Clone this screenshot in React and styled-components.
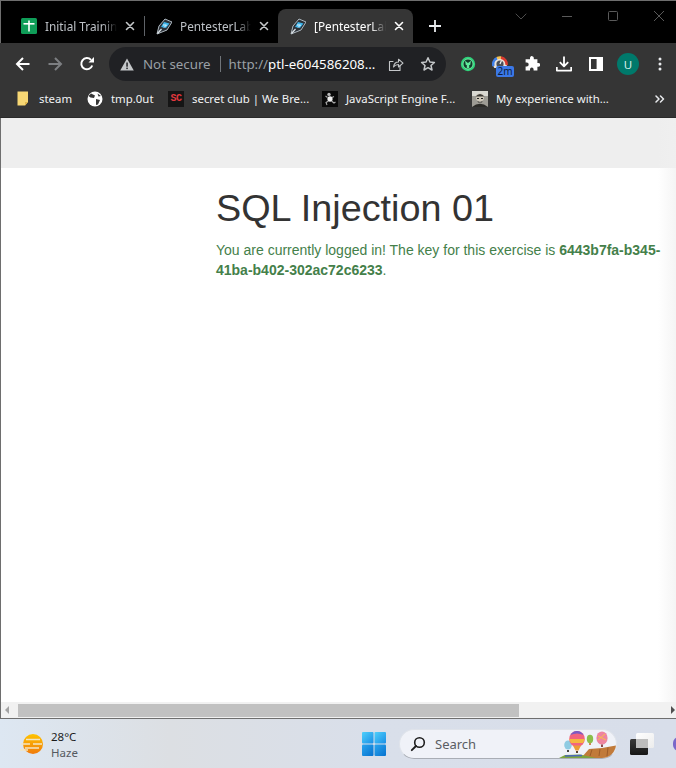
import React from "react";
import styled, { createGlobalStyle } from "styled-components";

const GlobalStyle = createGlobalStyle`
  html, body {
    margin: 0;
    padding: 0;
    background: #fff;
  }
  * {
    box-sizing: border-box;
  }
`;

const Screen = styled.div`
  width: 676px;
  height: 768px;
  overflow: hidden;
  display: flex;
  flex-direction: column;
  font-family: "Noto Sans", "Open Sans", sans-serif;
`;

const TabStrip = styled.div`
  height: 43px;
  flex: none;
  background: #000;
  border-top: 1px solid #6e6e6e;
  border-left: 1px solid #6e6e6e;
  display: flex;
  align-items: flex-end;
  padding-left: 8px;
`;

const Tab = styled.div`
  position: relative;
  width: ${({ $width }) => $width}px;
  height: 34px;
  flex: none;
  display: flex;
  align-items: center;
  gap: 8px;
  padding: 0 9px 0 12px;
  border-radius: 8px 8px 0 0;
  background: ${({ $active }) => ($active ? "#353535" : "transparent")};
  color: ${({ $active }) => ($active ? "#fff" : "#bdc1c6")};
`;

const TabDivider = styled.div`
  width: 1px;
  height: 20px;
  flex: none;
  margin: 0 -1px 7px 0;
  background: #5f6368;
`;

const TabTitle = styled.span`
  flex: 1;
  min-width: 0;
  font-size: 11.8px;
  white-space: nowrap;
  overflow: hidden;
  -webkit-mask-image: linear-gradient(to right, #000 80%, transparent 100%);
  mask-image: linear-gradient(to right, #000 80%, transparent 100%);
`;

const NewTab = styled.div`
  width: 24px;
  height: 34px;
  flex: none;
  margin-left: 10px;
  display: flex;
  align-items: center;
  justify-content: center;
`;

const WindowControls = styled.div`
  margin-left: auto;
  margin-right: -6px;
  align-self: flex-start;
  display: flex;
  height: 30px;
  align-items: center;
  flex: none;
`;

const WindowButton = styled.div`
  width: 46px;
  height: 30px;
  display: flex;
  align-items: center;
  justify-content: center;
`;

const Toolbar = styled.div`
  height: 42px;
  flex: none;
  background: #353535;
  display: flex;
  align-items: center;
  padding-left: 7px;
`;

const ToolButton = styled.div`
  width: 32px;
  height: 32px;
  flex: none;
  display: flex;
  align-items: center;
  justify-content: center;
  position: relative;
`;

const NavGroup = styled.div`
  display: flex;
  width: 102px;
  flex: none;
`;

const Omnibox = styled.div`
  width: 337px;
  height: 34px;
  flex: none;
  border-radius: 17px;
  background: #202124;
  display: flex;
  align-items: center;
  padding-left: 11px;
  padding-right: 2px;
  font-size: 13.3px;
`;

const Security = styled.span`
  color: #9aa0a6;
  margin-left: 9px;
  white-space: nowrap;
`;

const OmniDivider = styled.div`
  width: 1px;
  height: 16px;
  background: #70757a;
  margin: 0 8px 0 9px;
  flex: none;
`;

const Url = styled.span`
  flex: 1;
  min-width: 0;
  color: #fff;
  white-space: nowrap;
  overflow: hidden;
`;

const UrlScheme = styled.span`
  color: #9aa0a6;
`;

const ExtensionGroup = styled.div`
  display: flex;
  flex: none;
  margin-left: 6px;
`;

const Badge = styled.span`
  position: absolute;
  left: 12px;
  bottom: 3px;
  width: 18px;
  height: 11px;
  border-radius: 2px;
  background: #3b78e7;
  color: #0d1d3a;
  font-size: 10px;
  line-height: 11px;
  text-align: center;
`;

const Avatar = styled.div`
  width: 22px;
  height: 22px;
  border-radius: 50%;
  background: #00796b;
  color: #d9f0ec;
  font-size: 11.5px;
  display: flex;
  align-items: center;
  justify-content: center;
`;

const BookmarkBar = styled.div`
  height: 33px;
  flex: none;
  background: #353535;
  border-bottom: 1px solid #2a2a2a;
  display: flex;
  align-items: center;
  padding-bottom: 5px;
`;

const Bookmark = styled.div`
  display: flex;
  align-items: center;
  gap: 8px;
  flex: none;
  width: ${({ $width }) => $width}px;
  color: #f1f3f4;
  font-size: 11.4px;
  white-space: nowrap;
  overflow: hidden;
`;

const BookmarkList = styled.div`
  display: flex;
  padding-left: 16px;
  flex: 1;
`;

const ScFavicon = styled.span`
  width: 16px;
  height: 16px;
  flex: none;
  background: #151515;
  color: #e2383f;
  font-family: "Liberation Mono", monospace;
  font-size: 10px;
  font-weight: 700;
  line-height: 16px;
  text-align: center;
  letter-spacing: -0.5px;
`;

const Chevrons = styled.div`
  width: 32px;
  flex: none;
  display: flex;
  justify-content: center;
`;

const PageTopBand = styled.div`
  height: 50px;
  flex: none;
  background: #eee;
  border-left: 1px solid #6e6e6e;
`;

const Page = styled.main`
  flex: 1;
  min-height: 0;
  position: relative;
  background: #fff;
  border-left: 1px solid #6e6e6e;
  padding: 19px 0 0 215px;
  font-family: "Liberation Sans", Arial, sans-serif;
  &::after {
    content: "";
    position: absolute;
    top: -50px;
    right: 0;
    bottom: 0;
    width: 18px;
    background: linear-gradient(to right, rgba(240, 240, 240, 0), rgba(240, 240, 240, 0.7));
  }
`;

const Heading = styled.h1`
  margin: 0 0 10px;
  font-size: 37.8px;
  line-height: 43px;
  font-weight: 400;
  color: #333;
  white-space: nowrap;
`;

const Message = styled.p`
  margin: 0;
  width: 450px;
  font-size: 14px;
  line-height: 20px;
  color: #44804a;
`;

const Scrollbar = styled.div`
  height: 17px;
  flex: none;
  background: #f1f1f1;
  border-left: 1px solid #6e6e6e;
  border-bottom: 1px solid #6e6e6e;
  display: flex;
  align-items: center;
  justify-content: space-between;
  padding: 0 1px 0 4px;
  position: relative;
`;

const ScrollThumb = styled.div`
  position: absolute;
  left: 17px;
  top: 2px;
  width: 501px;
  height: 13px;
  background: #c1c1c1;
`;

const ScrollArrow = styled.span`
  width: 0;
  height: 0;
  border-top: 4px solid transparent;
  border-bottom: 4px solid transparent;
  ${({ $dir }) =>
    $dir === "left" ? "border-right: 4px solid #a3a3a3;" : "border-left: 4px solid #505050;"}
`;

const Taskbar = styled.footer`
  height: 49px;
  flex: none;
  background: linear-gradient(to right, #dde7f2 0%, #dcdfe3 25%, #d9dfea 55%, #d8deea 100%);
  display: flex;
  align-items: center;
  padding-left: 20px;
`;

const Weather = styled.div`
  display: flex;
  align-items: center;
  gap: 7px;
  width: 342px;
  flex: none;
`;

const WeatherText = styled.div`
  display: flex;
  flex-direction: column;
  margin-top: 3px;
  font-size: 11.5px;
  line-height: 16px;
  color: #1b1b1b;
`;

const WeatherSub = styled.span`
  color: #555a60;
`;

const SearchPill = styled.div`
  width: 218px;
  height: 30px;
  flex: none;
  margin-left: 13px;
  border-radius: 15px;
  background: #f0f2f8;
  border: 1px solid #dfe3ea;
  border-bottom-color: #a9adb5;
  display: flex;
  align-items: center;
  gap: 9px;
  padding-left: 10px;
  position: relative;
  overflow: hidden;
  font-size: 13px;
  color: #5a5d63;
`;

const SearchArt = styled.div`
  position: absolute;
  right: 0;
  top: 0;
  line-height: 0;
`;

const TaskView = styled.div`
  margin-left: 13px;
  line-height: 0;
  flex: none;
`;

const PinnedApp = styled.div`
  margin-left: 19px;
  width: 12px;
  height: 14px;
  flex: none;
  border-radius: 6px 0 0 6px;
  background: #7a68c9;
`;

const stroke = { fill: "none", stroke: "currentColor", strokeLinecap: "round", strokeLinejoin: "round" };

function SheetsIcon() {
  return (
    <svg width="16" height="16" viewBox="0 0 16 16" style={{ flex: "none" }}>
      <rect width="16" height="16" rx="1.5" fill="#0f9d58" />
      <rect x="2.5" y="5" width="11" height="1.6" fill="#fff" />
      <rect x="7.2" y="2.5" width="1.6" height="11" fill="#fff" />
    </svg>
  );
}

function LabIcon() {
  return (
    <svg width="16" height="17" viewBox="0 0 16 17" style={{ flex: "none" }}>
      <path d="M9 1 L16 4 L11 12 L1 16 L3 8 Z" fill="#2c3138" stroke="#aeb8c0" strokeWidth="1" strokeLinejoin="round" />
      <path d="M8 4 L13.5 5.5 L10 10 L5 9 Z" fill="#3db4ea" />
      <path d="M7 7 H10.5 L8 9.5" stroke="#e8f7ff" strokeWidth="1" fill="none" />
      <path d="M1.5 15.5 L5.5 11" stroke="#dfe6ea" strokeWidth="1.2" />
    </svg>
  );
}

function CloseX({ color = "#c4c7c9" }) {
  return (
    <svg width="10" height="10" viewBox="0 0 10 10" style={{ flex: "none", color }}>
      <path d="M1.5 1.5 L8.5 8.5 M8.5 1.5 L1.5 8.5" {...stroke} strokeWidth="1.6" />
    </svg>
  );
}

function Arrow({ flip, color }) {
  return (
    <svg width="16" height="16" viewBox="0 0 16 16" style={{ color, transform: flip ? "scaleX(-1)" : "none" }}>
      <path d="M14.5 8 H2 M8 2 L2 8 L8 14" {...stroke} strokeWidth="2" strokeLinecap="butt" strokeLinejoin="miter" />
    </svg>
  );
}

function Reload() {
  return (
    <svg width="16" height="16" viewBox="0 0 16 16" style={{ color: "#fff" }}>
      <path d="M13.2 9.5 A5.6 5.6 0 1 1 12 3.9" {...stroke} strokeWidth="2" strokeLinecap="butt" />
      <path d="M9.5 6.6 H15 V1 Z" fill="#fff" />
    </svg>
  );
}

function WarnIcon() {
  return (
    <svg width="14" height="13" viewBox="0 0 14 13" style={{ flex: "none" }}>
      <path d="M7 0.5 L13.8 12.5 H0.2 Z" fill="#c4c7c9" />
      <rect x="6.3" y="4.5" width="1.5" height="4.2" fill="#202124" />
      <rect x="6.3" y="9.6" width="1.5" height="1.5" fill="#202124" />
    </svg>
  );
}

function ShareIcon() {
  return (
    <svg width="16" height="15" viewBox="0 0 16 15" style={{ color: "#c4c7c9" }}>
      <path d="M12 9 V13.5 H1.5 V4.5 H5" {...stroke} strokeWidth="1.1" />
      <path d="M5.5 10 C6 6.5 8 5 10.5 5 V2.2 L15 6.2 L10.5 10 V7.5 C8.5 7.5 7 8 5.5 10 Z" {...stroke} strokeWidth="1.1" />
    </svg>
  );
}

function StarIcon() {
  return (
    <svg width="16" height="16" viewBox="0 0 16 16" style={{ color: "#c4c7c9" }}>
      <path d="M8 1.8 L9.9 6 L14.4 6.5 L11 9.5 L12 14 L8 11.7 L4 14 L5 9.5 L1.6 6.5 L6.1 6 Z" {...stroke} strokeWidth="1.5" />
    </svg>
  );
}

function GreenExt() {
  return (
    <svg width="16" height="16" viewBox="0 0 16 16">
      <circle cx="8" cy="8" r="7.2" fill="#2fd27a" />
      <circle cx="8" cy="8" r="5" fill="#123a2a" stroke="#8af5b4" strokeWidth="0.8" />
      <path d="M5 4.8 L5.8 9 H10.2 L11 4.8 L8 7 Z" fill="#5fe89a" />
      <rect x="6.8" y="9" width="2.4" height="3" fill="#5fe89a" />
    </svg>
  );
}

function GaugeExt() {
  return (
    <svg width="16" height="12" viewBox="0 0 16 12" style={{ position: "absolute", left: 8, top: 8 }}>
      <circle cx="8" cy="8" r="7" fill="#e9e2d8" />
      <path d="M1.5 10 A6.5 6.5 0 0 1 5 2.2" stroke="#3f7fe8" strokeWidth="2.6" fill="none" />
      <path d="M5 2.2 A6.5 6.5 0 0 1 9 1.6" stroke="#f4c04e" strokeWidth="2.6" fill="none" />
      <path d="M9 1.6 A6.5 6.5 0 0 1 14.5 9" stroke="#d93a2f" strokeWidth="2.6" fill="none" />
      <circle cx="8" cy="8" r="3.6" fill="#4a4f57" />
      <path d="M8 8 L9.5 4.5" stroke="#f0f0f0" strokeWidth="1.2" />
    </svg>
  );
}

function PuzzleIcon() {
  return (
    <svg width="16" height="16" viewBox="0 0 16 16">
      <path
        fill="#fff"
        d="M6.2 1.2 a1.9 1.9 0 0 1 3.6 0.6 V3.2 H13.4 V7 H14.4 a1.9 1.9 0 0 1 0 3.8 H13.4 V14.6 H9.6 V13.4 a1.8 1.8 0 0 0 -3.6 0 V14.6 H1.6 V10.4 H2.8 a1.9 1.9 0 0 0 0 -3.8 H1.6 V3.2 H6 V1.8 Z"
      />
    </svg>
  );
}

function DownloadIcon() {
  return (
    <svg width="16" height="16" viewBox="0 0 16 16" style={{ color: "#fff" }}>
      <path d="M8 0.5 V10 M3.8 6.2 L8 10.4 L12.2 6.2" {...stroke} strokeWidth="1.8" strokeLinecap="butt" />
      <path d="M0.8 11 V14.6 H15.2 V11" {...stroke} strokeWidth="1.8" strokeLinecap="butt" />
    </svg>
  );
}

function SidePanelIcon() {
  return (
    <svg width="14" height="14" viewBox="0 0 14 14">
      <rect width="14" height="14" fill="#fff" />
      <rect x="2" y="2" width="5.6" height="10" fill="#353535" />
    </svg>
  );
}

function DotsIcon() {
  return (
    <svg width="4" height="14" viewBox="0 0 4 14">
      <circle cx="2" cy="2" r="1.5" fill="#e8eaed" />
      <circle cx="2" cy="7" r="1.5" fill="#e8eaed" />
      <circle cx="2" cy="12" r="1.5" fill="#e8eaed" />
    </svg>
  );
}

function FolderIcon() {
  return (
    <svg width="12" height="15" viewBox="0 0 12 15" style={{ flex: "none", margin: "0 2px 0 1px" }}>
      <path d="M0.5 0.5 H11 V11 L8 14.5 H0.5 Z" fill="#f7d774" />
      <path d="M8 14.5 V11 H11" fill="#e0b64b" />
    </svg>
  );
}

function GlobeIcon() {
  return (
    <svg width="16" height="16" viewBox="0 0 16 16" style={{ flex: "none" }}>
      <circle cx="8" cy="8" r="7.5" fill="#fff" />
      <path d="M4 2.5 L8 4.5 L7 7 L3.5 6.5 L1.5 5 Z M9 8 L13 9 L11 13.5 L9 14 Z M10.5 2.5 L14 5 L11.5 5.5 Z" fill="#353535" />
    </svg>
  );
}

function JsIcon() {
  return (
    <svg width="16" height="16" viewBox="0 0 16 16" style={{ flex: "none" }}>
      <rect width="16" height="16" fill="#0a0a0a" />
      <circle cx="7" cy="3.4" r="1.7" fill="#bbb" />
      <ellipse cx="8" cy="8" rx="2.6" ry="2.8" fill="#f2f2f2" />
      <path d="M6.5 10 L4 11.5 L5 14 M9.5 10 L12 12 L13.5 11 M5.5 6.5 L3.5 5 M10 6.5 L12 5.5" stroke="#aaa" strokeWidth="1.1" fill="none" />
    </svg>
  );
}

function PortraitIcon() {
  return (
    <svg width="16" height="16" viewBox="0 0 16 16" style={{ flex: "none" }}>
      <rect width="16" height="16" fill="#9d9b94" />
      <rect width="16" height="5" fill="#d9d8d2" />
      <circle cx="8" cy="6.5" r="4" fill="#cfc8ba" />
      <path d="M3.5 5.5 Q8 0.5 12.5 5.5 Z" fill="#3c3a36" />
      <path d="M5 7.5 H7 M9 7.5 H11" stroke="#222" strokeWidth="1" />
      <path d="M5.5 9.8 Q8 12.2 10.5 9.8 L10 11.5 H6 Z" fill="#3c3a36" />
      <path d="M0 16 Q8 9.5 16 16 Z" fill="#2b2a27" />
    </svg>
  );
}

function WeatherIcon() {
  return (
    <svg width="24" height="22" viewBox="0 0 24 22" style={{ flex: "none" }}>
      <defs>
        <linearGradient id="sun" x1="0" y1="0" x2="0" y2="1">
          <stop offset="0" stopColor="#ffc400" />
          <stop offset="1" stopColor="#f07a0c" />
        </linearGradient>
      </defs>
      <circle cx="13" cy="11" r="10" fill="url(#sun)" />
      <path d="M6 6.5 H20 M1 11 H10 M13 11 H22 M5 15 H19 M0 17 H8" stroke="#f3e6c2" strokeWidth="1.5" />
    </svg>
  );
}

function WindowsLogo() {
  return (
    <svg width="24" height="24" viewBox="0 0 24 24" style={{ flex: "none" }}>
      <defs>
        <linearGradient id="winTop" x1="0" y1="0" x2="1" y2="1">
          <stop offset="0" stopColor="#4fd0fb" />
          <stop offset="1" stopColor="#1a8fe6" />
        </linearGradient>
        <linearGradient id="winBottom" x1="0" y1="0" x2="1" y2="1">
          <stop offset="0" stopColor="#2aa5ee" />
          <stop offset="1" stopColor="#0672cf" />
        </linearGradient>
      </defs>
      <rect x="0" y="0" width="11.5" height="11.5" rx="1" fill="url(#winTop)" />
      <rect x="12.5" y="0" width="11.5" height="11.5" rx="1" fill="url(#winTop)" />
      <rect x="0" y="12.5" width="11.5" height="11.5" rx="1" fill="url(#winBottom)" />
      <rect x="12.5" y="12.5" width="11.5" height="11.5" rx="1" fill="url(#winBottom)" />
    </svg>
  );
}

function SearchGlass() {
  return (
    <svg width="16" height="16" viewBox="0 0 16 16" style={{ color: "#1d1d1d", flex: "none" }}>
      <circle cx="9.5" cy="6.5" r="4.8" {...stroke} strokeWidth="1.6" />
      <path d="M6 10 L1.8 14.2" {...stroke} strokeWidth="1.9" />
    </svg>
  );
}

function BalloonArt() {
  return (
    <svg width="60" height="28" viewBox="0 0 60 28">
      <path d="M26 27 L33 19 L46 18 L60 15.5 V28 H26 Z" fill="#c17a3a" />
      <path d="M36 19.5 L34 26 M44 19 L43 26 M52 17.5 L51 26" stroke="#9c5c2a" strokeWidth="1" />
      <path d="M3 28 L9 25 L24 24.5 L40 28 Z" fill="#7da53f" />
      <path d="M9 26 L26 25.5" stroke="#4a68b8" strokeWidth="1.4" />
      <ellipse cx="12" cy="15" rx="3.8" ry="4.6" fill="#8fcbe2" />
      <path d="M11 20 H13 V22 H11 Z" fill="#444" />
      <ellipse cx="21" cy="9" rx="7.8" ry="8" fill="#f2647e" />
      <path d="M14.4 5 Q21 2 27.6 5 Q25 0.8 21 1 Q17 0.8 14.4 5 Z" fill="#7b5bc4" />
      <path d="M13.4 9 H28.6 Q28.4 11.5 27 13 H15 Q13.6 11.5 13.4 9 Z" fill="#f4b73f" />
      <path d="M17 15.5 L25 15.5 L22.5 20.5 H19.5 Z" fill="#ec9c35" />
      <path d="M20 21 H22 V23 H20 Z" fill="#5c4332" />
      <ellipse cx="34" cy="9" rx="3.2" ry="4.2" fill="#8bbf4a" />
      <path d="M33 13 H35 V15 H33 Z" fill="#c85" />
      <ellipse cx="46" cy="8" rx="5.6" ry="6.6" fill="#ee84a0" />
      <path d="M42 6 L50 10 M42 10 L49 4" stroke="#f5c04a" strokeWidth="1" />
      <path d="M45 14.5 H47 V17 H45 Z" fill="#8a4a4a" />
    </svg>
  );
}

function TaskViewIcon() {
  return (
    <svg width="24" height="22" viewBox="0 0 24 22">
      <defs>
        <linearGradient id="tvBack" x1="0" y1="0" x2="1" y2="1">
          <stop offset="0" stopColor="#ffffff" />
          <stop offset="1" stopColor="#ececec" />
        </linearGradient>
        <linearGradient id="tvFront" x1="0" y1="0" x2="0" y2="1">
          <stop offset="0" stopColor="#3a3a3a" />
          <stop offset="1" stopColor="#161616" />
        </linearGradient>
      </defs>
      <rect x="0" y="6" width="18" height="16" rx="1.5" fill="url(#tvFront)" />
      <rect x="6" y="0" width="18" height="15" rx="1.5" fill="url(#tvBack)" />
      <path d="M6 6 H18 V15 H6 Z" fill="#bdbdbd" />
    </svg>
  );
}

export default function App() {
  return (
    <Screen>
      <GlobalStyle />
      <TabStrip>
        <Tab $width={135}>
          <SheetsIcon />
          <TabTitle>Initial Training</TabTitle>
          <CloseX />
        </Tab>
        <TabDivider />
        <Tab $width={134}>
          <LabIcon />
          <TabTitle>PentesterLab</TabTitle>
          <CloseX />
        </Tab>
        <Tab $width={135} $active>
          <LabIcon />
          <TabTitle>[PentesterLab]</TabTitle>
          <CloseX color="#fff" />
        </Tab>
        <NewTab>
          <svg width="12" height="12" viewBox="0 0 12 12" style={{ color: "#e8eaed" }}>
            <path d="M6 0 V12 M0 6 H12" {...stroke} strokeWidth="1.8" strokeLinecap="butt" />
          </svg>
        </NewTab>
        <WindowControls>
          <WindowButton>
            <svg width="12" height="7" viewBox="0 0 12 7" style={{ color: "#4d4d4d" }}>
              <path d="M1 1 L6 6 L11 1" {...stroke} strokeWidth="1" />
            </svg>
          </WindowButton>
          <WindowButton>
            <svg width="10" height="1" viewBox="0 0 10 1">
              <rect width="10" height="1" fill="#5a5a5a" />
            </svg>
          </WindowButton>
          <WindowButton>
            <svg width="10" height="10" viewBox="0 0 10 10">
              <rect x="0.5" y="0.5" width="9" height="9" rx="1" fill="none" stroke="#5a5a5a" />
            </svg>
          </WindowButton>
          <WindowButton>
            <svg width="10" height="10" viewBox="0 0 10 10" style={{ color: "#5a5a5a" }}>
              <path d="M0 0 L10 10 M10 0 L0 10" {...stroke} strokeWidth="1" />
            </svg>
          </WindowButton>
        </WindowControls>
      </TabStrip>

      <Toolbar>
        <NavGroup>
          <ToolButton>
            <Arrow color="#fff" />
          </ToolButton>
          <ToolButton>
            <Arrow flip color="#7d7f82" />
          </ToolButton>
          <ToolButton>
            <Reload />
          </ToolButton>
        </NavGroup>
        <Omnibox>
          <WarnIcon />
          <Security>Not secure</Security>
          <OmniDivider />
          <Url>
            <UrlScheme>http://</UrlScheme>ptl-e604586208...
          </Url>
          <ToolButton>
            <ShareIcon />
          </ToolButton>
          <ToolButton>
            <StarIcon />
          </ToolButton>
        </Omnibox>
        <ExtensionGroup>
          <ToolButton>
            <GreenExt />
          </ToolButton>
          <ToolButton>
            <GaugeExt />
            <Badge>2m</Badge>
          </ToolButton>
          <ToolButton>
            <PuzzleIcon />
          </ToolButton>
          <ToolButton>
            <DownloadIcon />
          </ToolButton>
          <ToolButton>
            <SidePanelIcon />
          </ToolButton>
          <ToolButton>
            <Avatar>U</Avatar>
          </ToolButton>
          <ToolButton>
            <DotsIcon />
          </ToolButton>
        </ExtensionGroup>
      </Toolbar>

      <BookmarkBar>
        <BookmarkList>
          <Bookmark $width={71}>
            <FolderIcon />
            <span>steam</span>
          </Bookmark>
          <Bookmark $width={81}>
            <GlobeIcon />
            <span>tmp.0ut</span>
          </Bookmark>
          <Bookmark $width={154}>
            <ScFavicon>SC</ScFavicon>
            <span>secret club | We Bre...</span>
          </Bookmark>
          <Bookmark $width={150}>
            <JsIcon />
            <span>JavaScript Engine F...</span>
          </Bookmark>
          <Bookmark $width={165}>
            <PortraitIcon />
            <span>My experience with...</span>
          </Bookmark>
        </BookmarkList>
        <Chevrons>
          <svg width="10" height="8" viewBox="0 0 10 8" style={{ color: "#e8eaed" }}>
            <path d="M1 1 L4 4 L1 7 M5.5 1 L8.5 4 L5.5 7" {...stroke} strokeWidth="1.5" />
          </svg>
        </Chevrons>
      </BookmarkBar>

      <PageTopBand />
      <Page>
        <Heading>SQL Injection 01</Heading>
        <Message>
          You are currently logged in! The key for this exercise is{" "}
          <strong>6443b7fa-b345-41ba-b402-302ac72c6233</strong>.
        </Message>
      </Page>

      <Scrollbar>
        <ScrollArrow $dir="left" />
        <ScrollThumb />
        <ScrollArrow $dir="right" />
      </Scrollbar>

      <Taskbar>
        <Weather>
          <WeatherIcon />
          <WeatherText>
            <span>28°C</span>
            <WeatherSub>Haze</WeatherSub>
          </WeatherText>
        </Weather>
        <WindowsLogo />
        <SearchPill>
          <SearchGlass />
          <span>Search</span>
          <SearchArt>
            <BalloonArt />
          </SearchArt>
        </SearchPill>
        <TaskView>
          <TaskViewIcon />
        </TaskView>
        <PinnedApp />
      </Taskbar>
    </Screen>
  );
}
